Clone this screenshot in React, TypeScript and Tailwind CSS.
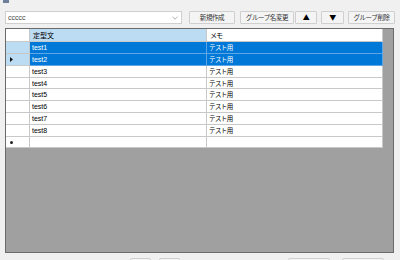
import React from 'react'

const rows = [
  { id: 1, text: 'test1', memo: 'テスト用', h: 'h-[12px]', selected: true },
  { id: 2, text: 'test2', memo: 'テスト用', h: 'h-[12px]', selected: true, current: true },
  { id: 3, text: 'test3', memo: 'テスト用', h: 'h-[12px]' },
  { id: 4, text: 'test4', memo: 'テスト用', h: 'h-[11px]' },
  { id: 5, text: 'test5', memo: 'テスト用', h: 'h-[12px]' },
  { id: 6, text: 'test6', memo: 'テスト用', h: 'h-[12px]' },
  { id: 7, text: 'test7', memo: 'テスト用', h: 'h-[12px]' },
  { id: 8, text: 'test8', memo: 'テスト用', h: 'h-[12px]' },
]

const jp = "font-['Noto_Sans_CJK_JP',sans-serif]"
const lat = "font-['Liberation_Sans','Noto_Sans_CJK_JP',sans-serif]"

function Btn({ label, w, ml }: { label: React.ReactNode; w: string; ml: string }) {
  return (
    <div className={`${w} ${ml} h-[13px] flex items-center justify-center border border-[#cfcfcf] bg-[#f4f4f4] rounded-[1px] text-[6.5px] leading-none text-[#333] tracking-[-0.4px] ${jp}`}>
      {label}
    </div>
  )
}

export default function App() {
  return (
    <div className="w-[400px] h-[260px] bg-[#f0f0f0] overflow-hidden">
      {/* top strip (cut off icon) */}
      <div className="h-[11px]">
        <div className="ml-[3px] w-[6px] h-[3px] bg-[#6d7f9a]" />
      </div>

      {/* toolbar */}
      <div className="flex h-[13px] ml-[5px]">
        <div className="w-[177px] h-[13px] bg-white border border-[#cfcfcf] flex items-center justify-between pl-[2px] pr-[3px]">
          <span className={`text-[7px] leading-none text-[#444] ${lat}`}>ccccc</span>
          <svg width="6" height="4" viewBox="0 0 6 4" fill="none">
            <path d="M0.5 0.8 L3 3.2 L5.5 0.8" stroke="#9a9a9a" strokeWidth="0.8" />
          </svg>
        </div>
        <Btn label="新規作成" w="w-[46px]" ml="ml-[7px]" />
        <Btn label="グループ名変更" w="w-[54px]" ml="ml-[5px]" />
        <Btn label={<span className="text-[7px] text-black">▲</span>} w="w-[22px]" ml="ml-[1px]" />
        <Btn label={<span className="text-[7px] text-black">▼</span>} w="w-[23px]" ml="ml-[4px]" />
        <Btn label="グループ削除" w="w-[47px]" ml="ml-[4px]" />
      </div>

      {/* data grid */}
      <div className="mt-[4px] ml-[5px] w-[389px] h-[225px] border border-[#6b6b6b] bg-[#a0a0a0]">
        <div className="w-[377px] grid grid-cols-[24px_177px_176px]">
          {/* header */}
          <div className="h-[13px] bg-white border-r border-b border-[#c8c8c8]" />
          <div className={`h-[13px] bg-[#bcdcf4] border-r border-b border-[#c8c8c8] flex items-center pl-[3px] text-[7px] leading-none text-black ${jp}`}>
            定型文
          </div>
          <div className={`h-[13px] bg-white border-r border-b border-[#c8c8c8] flex items-center pl-[3px] text-[7px] leading-none text-black tracking-[-1px] ${jp}`}>
            メモ
          </div>

          {rows.map(r => (
            <React.Fragment key={r.id}>
              <div className={`${r.h} border-r border-b border-[#c8c8c8] flex items-center pl-[4px] ${r.selected ? 'bg-[#bcdcf4]' : 'bg-white'}`}>
                {r.current && (
                  <svg width="3" height="5" viewBox="0 0 3 5">
                    <path d="M0 0 L3 2.5 L0 5 Z" fill="#111" />
                  </svg>
                )}
              </div>
              <div className={`${r.h} border-r border-b flex items-center pl-[2px] text-[7px] leading-none ${lat} ${r.selected ? 'bg-[#0078d7] text-white border-[#5ea6e6]' : 'bg-white text-black border-[#c8c8c8]'}`}>
                {r.text}
              </div>
              <div className={`${r.h} border-r border-b flex items-center pl-[2px] text-[6.5px] leading-none tracking-[-0.6px] ${jp} ${r.selected ? 'bg-[#0078d7] text-white border-[#5ea6e6]' : 'bg-white text-black border-[#c8c8c8]'}`}>
                {r.memo}
              </div>
            </React.Fragment>
          ))}

          {/* new row */}
          <div className="h-[11px] bg-white border-r border-b border-[#c8c8c8] flex items-center pl-[4px]">
            <div className="w-[3px] h-[3px] rounded-full bg-[#222]" />
          </div>
          <div className="h-[11px] bg-white border-r border-b border-[#c8c8c8]" />
          <div className="h-[11px] bg-white border-r border-b border-[#c8c8c8]" />
        </div>
      </div>

      {/* bottom buttons (cut off) */}
      <div className="flex mt-[5px]">
        <div className="ml-[130px] w-[21px] h-[14px] border border-[#cfcfcf] bg-[#f4f4f4] rounded-[2px]" />
        <div className="ml-[8px] w-[21px] h-[14px] border border-[#cfcfcf] bg-[#f4f4f4] rounded-[2px]" />
        <div className="ml-[108px] w-[42px] h-[14px] border border-[#cfcfcf] bg-[#f4f4f4] rounded-[2px]" />
        <div className="ml-[12px] w-[42px] h-[14px] border border-[#cfcfcf] bg-[#f4f4f4] rounded-[2px]" />
      </div>
    </div>
  )
}
